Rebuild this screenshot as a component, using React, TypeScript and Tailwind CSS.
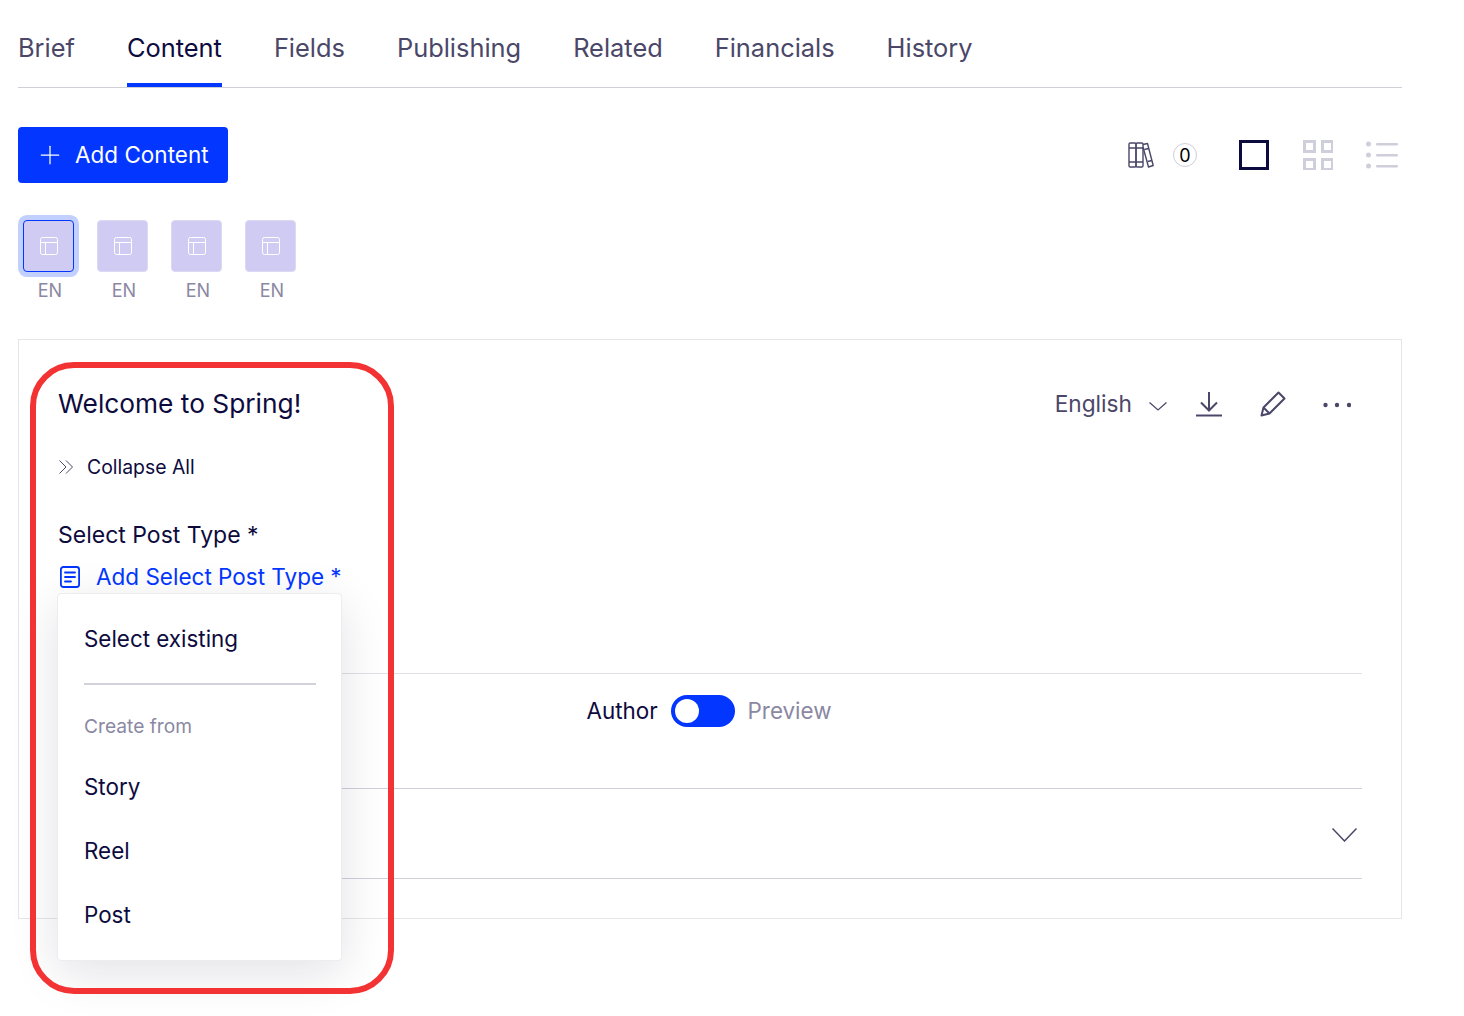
import React from 'react';
import { Plus } from 'lucide-react';

const tabs = ['Brief', 'Content', 'Fields', 'Publishing', 'Related', 'Financials', 'History'];

const PanelIcon = () => (
  <svg width="18" height="18" viewBox="0 0 18 18" fill="none" stroke="#ffffff" strokeWidth="1">
    <rect x="0.5" y="0.5" width="17" height="17" rx="2" />
    <path d="M0.5 5.5H17.5M5.5 5.5V17.5" />
  </svg>
);

const Books = () => (
  <svg width="26" height="26" viewBox="0 0 26 26" fill="none" stroke="#4a4768" strokeWidth="1.4" strokeLinejoin="round">
    <rect x="1" y="1" width="7" height="24" rx="1.2" />
    <rect x="8" y="1" width="7" height="24" rx="1.2" />
    <path d="M1 6H15M1 20H15" />
    <path d="M15 2.5L19.5 1.5L25.2 23.5L20.5 25L15 5" />
    <path d="M16.3 7.5L20.8 6.5M19.7 19.5L24 18.5" />
  </svg>
);

const GridIcon = () => (
  <svg width="30" height="30" viewBox="0 0 30 30" fill="none" stroke="#cfcedb" strokeWidth="3">
    <rect x="1.5" y="1.5" width="10" height="10" />
    <rect x="19.5" y="1.5" width="10" height="10" />
    <rect x="1.5" y="19.5" width="10" height="10" />
    <rect x="19.5" y="19.5" width="10" height="10" />
  </svg>
);

const ListIcon = () => (
  <svg width="34" height="30" viewBox="0 0 34 30" fill="#cfcedb">
    <circle cx="3.5" cy="4" r="2.5" />
    <circle cx="3.5" cy="15" r="2.5" />
    <circle cx="3.5" cy="26" r="2.5" />
    <rect x="11" y="3" width="22" height="2.4" rx="1.2" />
    <rect x="11" y="14" width="22" height="2.4" rx="1.2" />
    <rect x="11" y="25" width="22" height="2.4" rx="1.2" />
  </svg>
);

const DocIcon = () => (
  <svg width="22" height="22" viewBox="0 0 22 22" fill="none" stroke="#0336ff" strokeWidth="1.8" strokeLinecap="round">
    <rect x="1.9" y="1" width="18.2" height="20" rx="2.5" />
    <path d="M6 6.5H16M6 11H16M6 15.5H12" />
  </svg>
);

const DownloadIcon = () => (
  <svg width="26" height="25" viewBox="0 0 26 25" fill="none" stroke="#4a4768" strokeWidth="2">
    <path d="M13 0V18M5 10.5L13 18.5L21 10.5" />
    <path d="M0 23.5H26" />
  </svg>
);

const PencilIcon = () => (
  <svg width="26" height="26" viewBox="0 0 26 26" fill="none" stroke="#4a4768" strokeWidth="2" strokeLinejoin="round">
    <path d="M1.5 24.5L3.5 16.5L18.5 1.5L24.5 7.5L9.5 22.5Z" />
    <path d="M3.5 16.5L9.5 22.5" />
  </svg>
);

const DotsIcon = () => (
  <svg width="28" height="6" viewBox="0 0 28 6" fill="#4a4768">
    <circle cx="2.5" cy="3" r="2.2" />
    <circle cx="14" cy="3" r="2.2" />
    <circle cx="26" cy="3" r="2.2" />
  </svg>
);

const Chevron = ({ w, h, sw }: { w: number; h: number; sw: number }) => (
  <svg width={w} height={h} viewBox={`0 0 ${w} ${h}`} fill="none" stroke="#4a4768" strokeWidth={sw}>
    <path d={`M0.5 0.5L${w / 2} ${h - 1}L${w - 0.5} 0.5`} />
  </svg>
);

const DoubleChevron = () => (
  <svg width="14" height="14" viewBox="0 0 14 14" fill="none" stroke="#4a4768" strokeWidth="1">
    <path d="M0.5 0.5L7 7L0.5 13.5M7 0.5L13.5 7L7 13.5" />
  </svg>
);

const Thumb = ({ selected, className }: { selected?: boolean; className: string }) => (
  <div className={`flex w-[51px] flex-col items-center ${className}`}>
    <div
      className={`flex h-[52px] w-[51px] items-center justify-center rounded-[4px] bg-[#cfcbf2] ${
        selected ? 'border border-[#0336ff] shadow-[0_0_0_5px_#c2d0ff]' : 'border border-[#dcd9f5]'
      }`}
    >
      <PanelIcon />
    </div>
    <span className="ml-[3px] mt-[7px] text-[18px] leading-[24px] text-[#8a88a3]">EN</span>
  </div>
);

export default function App() {
  return (
    <div className="relative h-[1016px] w-[1464px] overflow-hidden bg-white pl-[18px] font-['Inter',sans-serif] text-[#0d0b3e]">
      <div className="w-[1384px]">
        <nav className="flex h-[88px] gap-[52px] border-b border-[#cfcfd6]">
          {tabs.map((t) => (
            <div
              key={t}
              className={`flex h-[87px] items-start pt-[30px] text-[25.4px] leading-[36px] ${
                t === 'Content' ? 'border-b-[4px] border-[#0336ff] text-[#0d0b3e]' : 'text-[#4a4768]'
              }`}
            >
              {t}
            </div>
          ))}
        </nav>

        <div className="mt-[39px] flex items-center justify-between">
          <button className="flex h-[56px] w-[210px] items-center rounded-[4px] bg-[#0336ff] pl-[17px] text-[22.5px] text-white">
            <Plus size={30} strokeWidth={1} />
            <span className="ml-[10px]">Add Content</span>
          </button>
          <div className="flex items-center pr-[3px]">
            <Books />
            <span className="ml-[19px] flex h-[24px] w-[24px] items-center justify-center rounded-full border border-[#cfcedb] text-[18px] text-black">
              0
            </span>
            <span className="ml-[42px] h-[30px] w-[30px] border-[3px] border-[#0d0b3e]" />
            <span className="ml-[34px]"><GridIcon /></span>
            <span className="ml-[32px]"><ListIcon /></span>
          </div>
        </div>

        <div className="ml-[5px] mt-[37px] flex">
          <Thumb selected className="mr-[23px]" />
          <Thumb className="mr-[23px]" />
          <Thumb className="mr-[23px]" />
          <Thumb className="" />
        </div>

        <section className="mt-[36px] h-[580px] border border-[#e6e6ea] px-[39px]">
          <div className="flex h-[334px] items-start justify-between border-b border-[#e0e0e6]">
            <div className="mt-[46px] flex flex-col items-start">
              <h1 className="text-[26.3px] leading-[36px]">Welcome to Spring!</h1>
              <div className="mt-[30px] flex items-center pl-[1px] text-[19.4px] leading-[30px]">
                <DoubleChevron />
                <span className="ml-[14px]">Collapse All</span>
              </div>
              <div className="mt-[37px] text-[23px] leading-[32px]">Select Post Type *</div>
              <div className="mt-[10px] flex items-center pl-[1px] text-[22.5px] leading-[32px] text-[#0336ff]">
                <DocIcon />
                <span className="ml-[15px]">Add Select Post Type *</span>
              </div>
            </div>
            <div className="mt-[46px] flex items-center text-[#4a4768]">
              <span className="text-[22.7px] leading-[36px]">English</span>
              <span className="ml-[17px] mt-[4px] flex"><Chevron w={18} h={9} sw={1.2} /></span>
              <span className="ml-[29px] flex"><DownloadIcon /></span>
              <span className="ml-[38px] flex"><PencilIcon /></span>
              <span className="ml-[37px] mr-[11px] mt-[2px] flex"><DotsIcon /></span>
            </div>
          </div>
          <div className="flex h-[115px] items-start justify-center border-b border-[#cfcedb] pr-[2px] pt-[21px]">
            <span className="text-[22.4px] leading-[32px]">Author</span>
            <span className="ml-[13px] flex h-[32px] w-[64px] items-center rounded-full bg-[#0336ff] pl-[4px]">
              <span className="h-[24px] w-[24px] rounded-full bg-white" />
            </span>
            <span className="ml-[13px] text-[22.4px] leading-[32px] text-[#8a88a3]">Preview</span>
          </div>
          <div className="flex h-[90px] items-center justify-end border-b border-[#cfcedb] pr-[5px]">
            <span className="mt-[3px] flex"><Chevron w={25} h={14} sw={1.5} /></span>
          </div>
        </section>
      </div>

      {/* menu open over the card rows */}
      <div className="absolute left-[57px] top-[593px] h-[368px] w-[285px] rounded-[4px] border border-[#ededf0] bg-white pl-[26px] pr-[25px] shadow-[0_12px_48px_rgba(20,20,50,0.12)]">
        <div className="flex h-[91px] items-start border-b-2 border-[#d2d2da] pt-[29px] text-[22.4px] leading-[32px]">Select existing</div>
        <div className="mt-[28px] text-[19.2px] leading-[26px] text-[#8a88a3]">Create from</div>
        <div className="mt-[32px] flex flex-col gap-[32px] text-[22.4px] leading-[32px]">
          <span>Story</span>
          <span>Reel</span>
          <span>Post</span>
        </div>
      </div>

      <div className="pointer-events-none absolute left-[30px] top-[362px] h-[632px] w-[364px] rounded-[44px] border-[6px] border-[#f33333]" />
    </div>
  );
}
